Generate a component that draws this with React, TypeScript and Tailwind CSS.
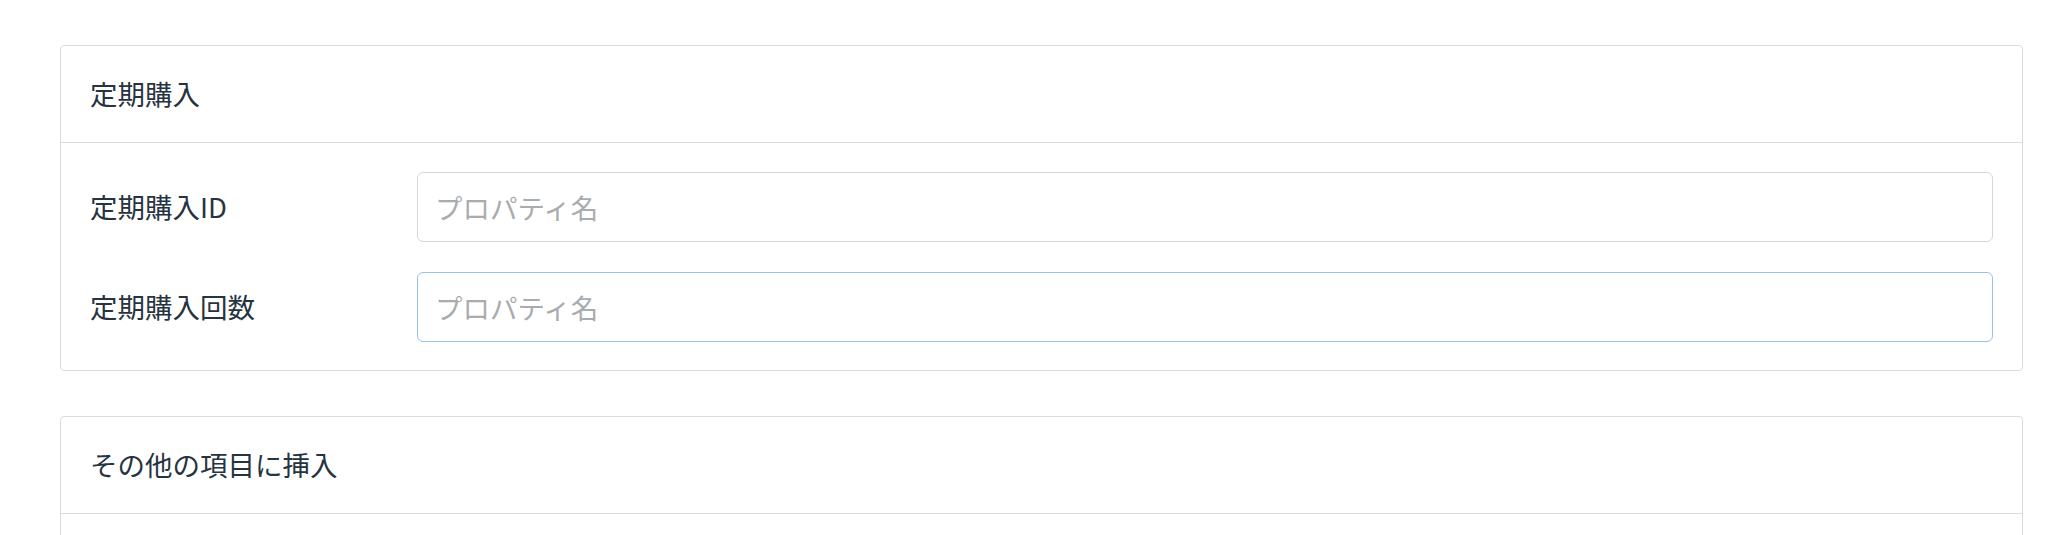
import React from "react";

const font = { fontFamily: '"Noto Sans CJK JP", "Noto Sans", sans-serif' };

function Card({ title, children }: { title: string; children?: React.ReactNode }) {
  return (
    <div className="border border-[#dcdcdc] rounded-[4px] bg-white">
      <div className="h-[97px] flex items-center px-[29px] border-b border-[#dcdcdc] text-[27.5px] text-[#26343f]">
        {title}
      </div>
      {children}
    </div>
  );
}

function Row({ label, focused }: { label: string; focused?: boolean }) {
  return (
    <div className="flex items-center">
      <div className="w-[327px] shrink-0 text-[27.5px] text-[#26343f]">{label}</div>
      <input
        placeholder="プロパティ名"
        className={
          "flex-1 h-[70px] rounded-[6px] border bg-white px-[17px] text-[27.5px] outline-none placeholder:text-[#a9acae] " +
          (focused ? "border-[#98c3ec]" : "border-[#d6d6d6]")
        }
        style={font}
      />
    </div>
  );
}

export default function App() {
  return (
    <div className="h-[535px] overflow-hidden bg-white pt-[45px] pl-[60px] pr-[25px]" style={font}>
      <Card title="定期購入">
        <div className="flex flex-col gap-[30px] pt-[29px] pb-[28px] pl-[29px] pr-[29px]">
          <Row label="定期購入ID" />
          <Row label="定期購入回数" focused />
        </div>
      </Card>
      <div className="mt-[45px]">
        <Card title="その他の項目に挿入">
          <div className="h-[120px]" />
        </Card>
      </div>
    </div>
  );
}
